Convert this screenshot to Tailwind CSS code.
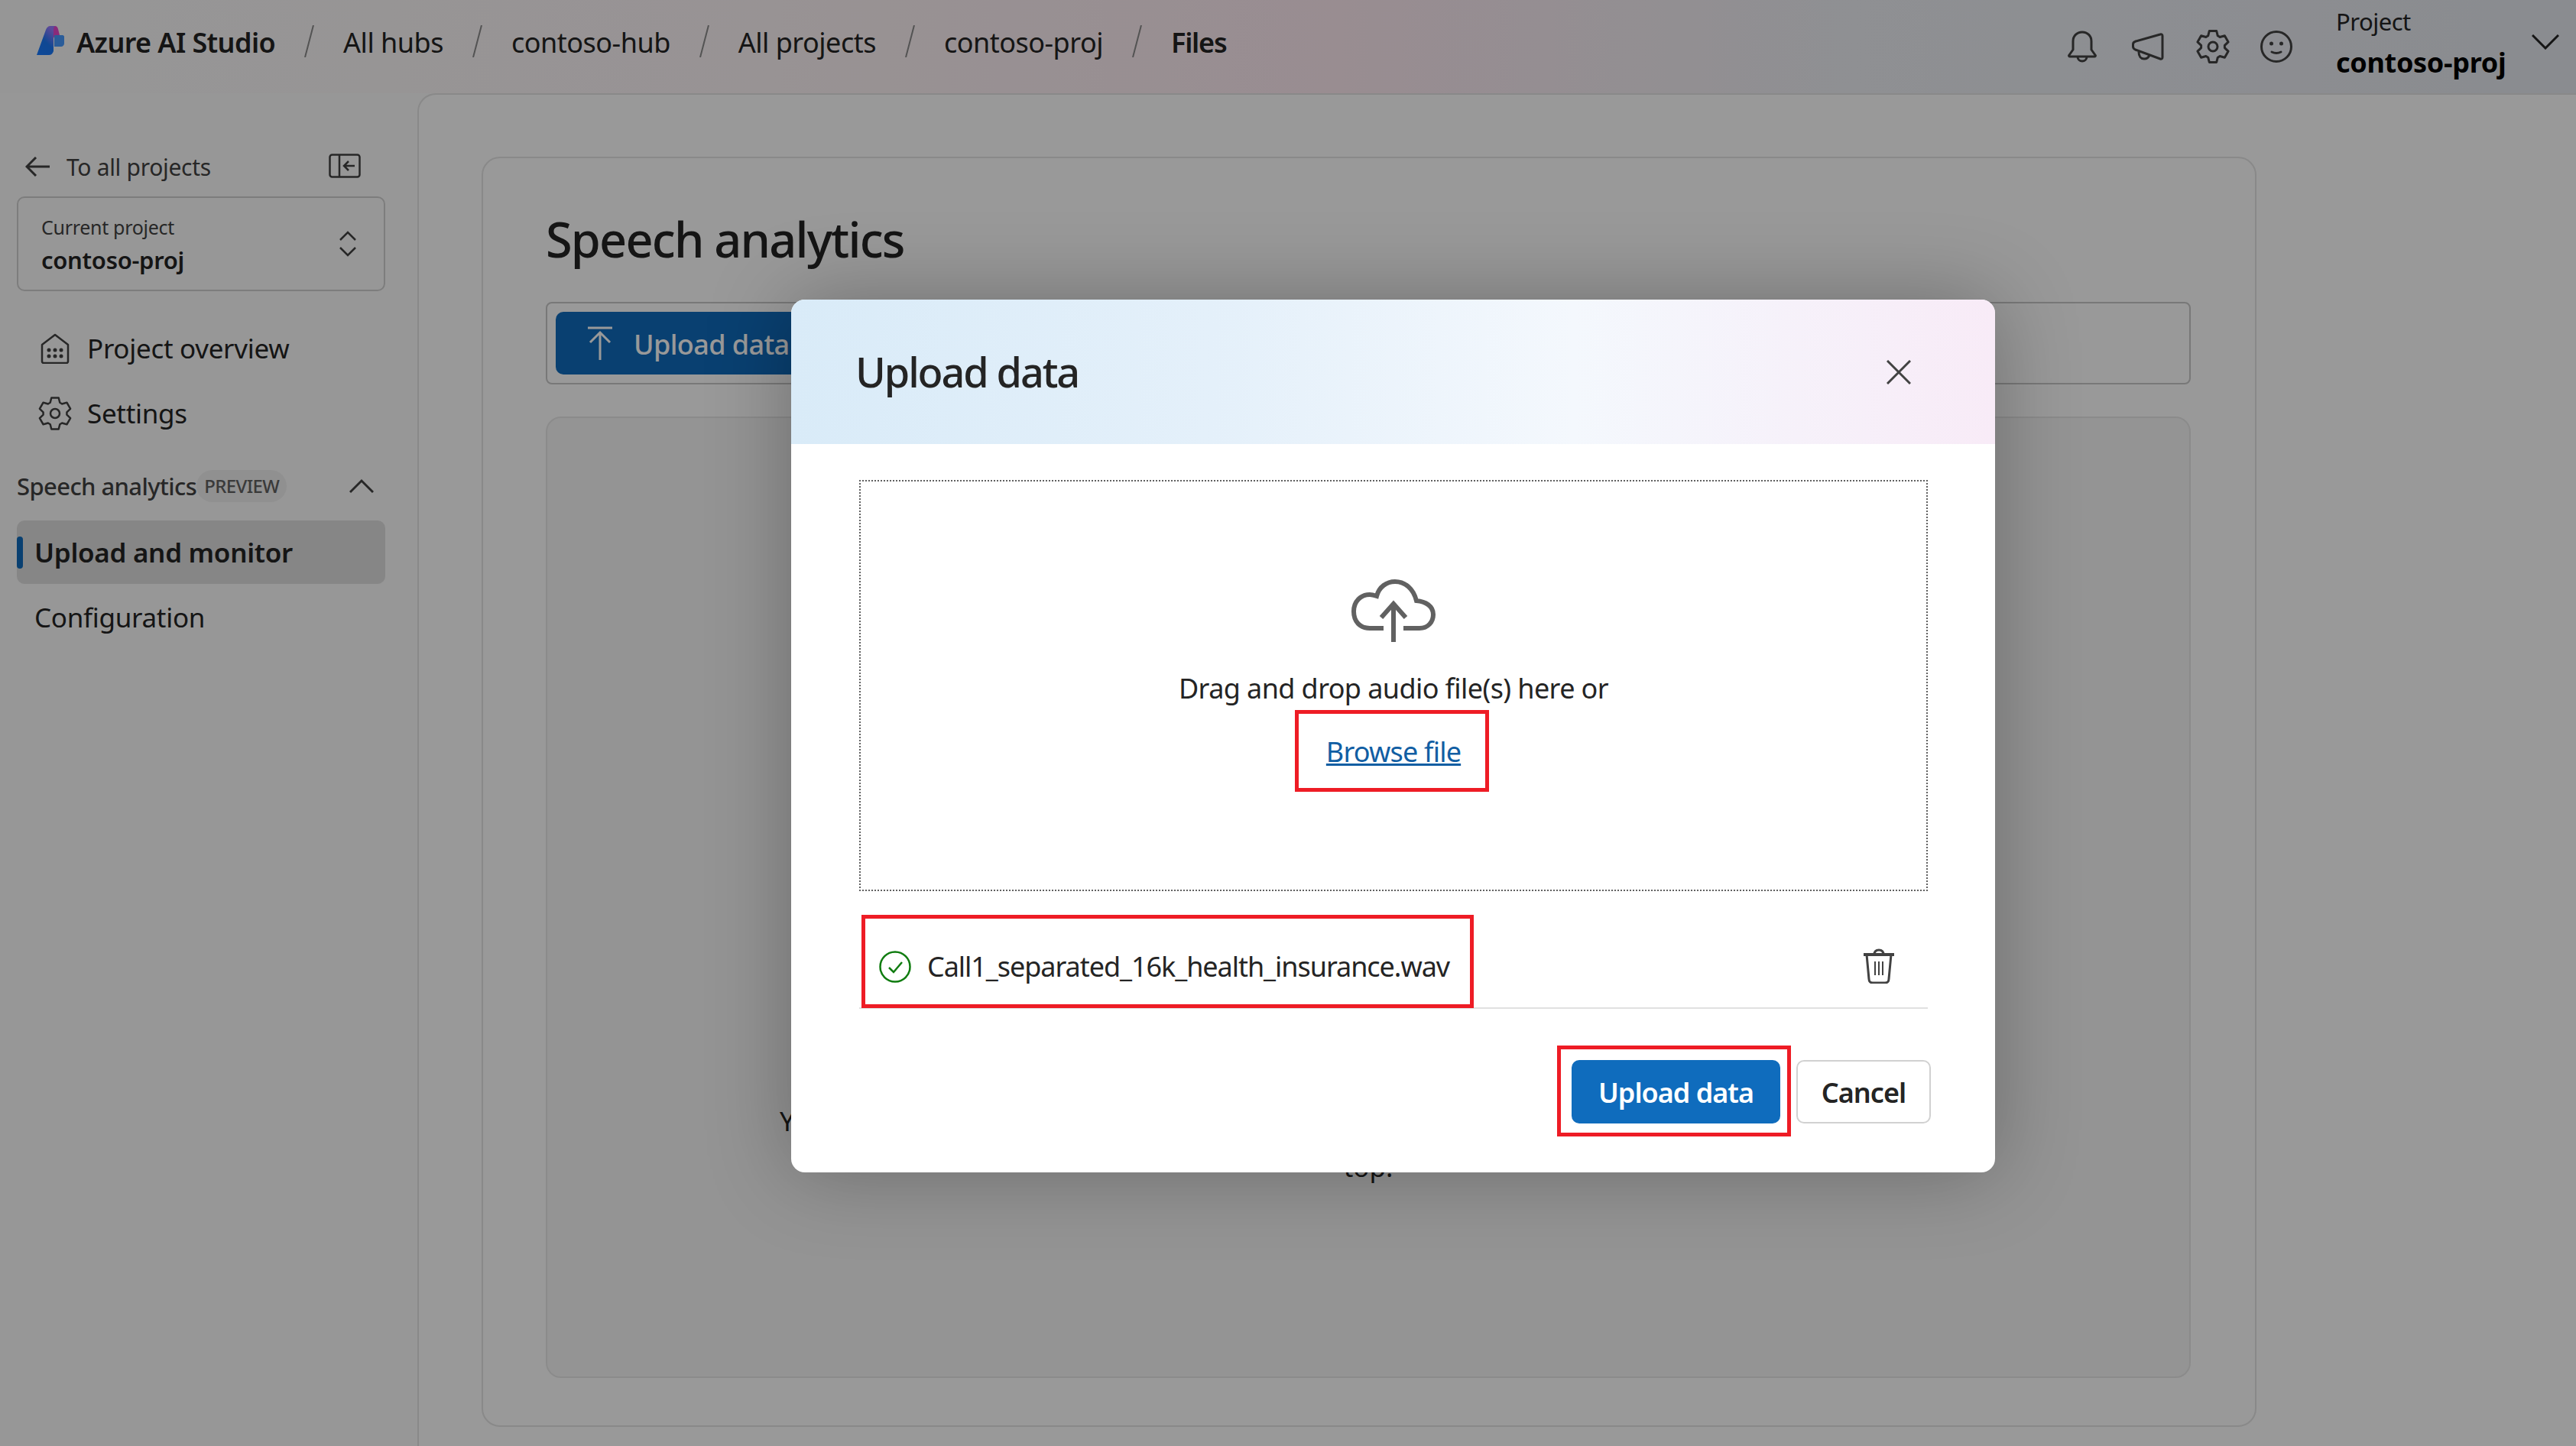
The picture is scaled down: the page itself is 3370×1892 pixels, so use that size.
<!DOCTYPE html>
<html lang="en">
<head>
    <meta charset="UTF-8">
    <meta name="viewport" content="width=device-width, initial-scale=1.0">
    <title>Speech analytics - Upload data</title>
    <script src="https://cdn.jsdelivr.net/npm/@tailwindcss/browser@4"></script>
</head>
<body class="font-['Noto_Sans',sans-serif] text-[#242424]">
<div class="relative w-[3370px] h-[1892px] overflow-hidden bg-[#fcfcfc] flex flex-col">

    <!-- top bar -->
    <header class="h-[122px] shrink-0 flex items-center pl-[48px] pr-[22px] text-[36px] tracking-[-0.5px] bg-[linear-gradient(90deg,#fbfbfb_0%,#fdf5f7_30%,#ffebf2_52%,#eef0f5_72%,#e6e9f0_100%)]">
        <nav class="flex items-center mb-[14px]">
            <svg class="w-[36px] h-[42px] mr-[16px]" viewBox="0 0 36 42">
                <defs>
                    <linearGradient id="logoBlue" x1="0" y1="1" x2="0.6" y2="0">
                        <stop offset="0" stop-color="#1a7bff"/>
                        <stop offset="0.55" stop-color="#1a78f5"/>
                        <stop offset="1" stop-color="#967bff"/>
                    </linearGradient>
                </defs>
                <path d="M24 1c2 0 3 1 4 4l2 8h-6l-3 6V1z" fill="#e646cc"/>
                <path d="M23 13h11c1 0 2 1 2 2v9c0 2-2 4-4 4h-9z" fill="#4699ff"/>
                <path d="M0 39L12 6c1-3 3-5 6-5h6c-1 1-2 2-2 5v28c-1 3-3 5-6 5z" fill="url(#logoBlue)"/>
            </svg>
            <span class="font-semibold pt-[4px] tracking-[-0.6px]">Azure AI Studio</span>
            <svg class="w-[13px] h-[42px] mx-[38px]" viewBox="0 0 13 42"><path d="M12 0L1 42" stroke="#8a8a8a" stroke-width="2"/></svg>
            <span class="pt-[4px]">All hubs</span>
            <svg class="w-[13px] h-[42px] mx-[38px]" viewBox="0 0 13 42"><path d="M12 0L1 42" stroke="#8a8a8a" stroke-width="2"/></svg>
            <span class="pt-[4px]">contoso-hub</span>
            <svg class="w-[13px] h-[42px] mx-[38px]" viewBox="0 0 13 42"><path d="M12 0L1 42" stroke="#8a8a8a" stroke-width="2"/></svg>
            <span class="pt-[4px]">All projects</span>
            <svg class="w-[13px] h-[42px] mx-[38px]" viewBox="0 0 13 42"><path d="M12 0L1 42" stroke="#8a8a8a" stroke-width="2"/></svg>
            <span class="pt-[4px]">contoso-proj</span>
            <svg class="w-[13px] h-[42px] mx-[38px]" viewBox="0 0 13 42"><path d="M12 0L1 42" stroke="#8a8a8a" stroke-width="2"/></svg>
            <span class="font-semibold pt-[4px] tracking-[-1.200px]">Files</span>
        </nav>

        <div class="ml-auto flex items-center">
            <svg class="w-[38px] h-[42px] mr-[46px]" viewBox="0 0 38 42" fill="none" stroke="#424242" stroke-width="3" stroke-linejoin="round">
                <path d="M19 2C12 2 7 7 7 14v11l-5 7c-1 1 0 2 1 2h32c1 0 2-1 1-2l-5-7V14C31 7 26 2 19 2z"/>
                <path d="M13 34c0 4 3 6 6 6s6-2 6-6"/>
            </svg>
            <svg class="w-[42px] h-[36px] mr-[42px]" viewBox="0 0 42 36" fill="none" stroke="#424242" stroke-width="3" stroke-linejoin="round">
                <path d="M37 2L5 11c-3 1-3.500 2-3.500 4v3c0 2 1 3 3 4L37 34c1.500.5 3 0 3-2V4c0-2-1.500-2.500-3-2z"/>
                <path d="M9 25c0 6 3 9 7 9s6-2 7-5"/>
            </svg>
            <svg class="w-[44px] h-[44px] mr-[40px]" viewBox="0 0 44 44" fill="none" stroke="#424242" stroke-width="3" stroke-linejoin="round">
                <path d="M17.300 1.500H26.700L28.300 7.800 31.100 9.500 37.400 7.700 42.100 15.900 37.400 20.400V23.600L42.100 28.100 37.400 36.300 31.100 34.500 28.300 36.200 26.700 42.500H17.300L15.700 36.200 12.900 34.500 6.600 36.300 1.900 28.100 6.600 23.600V20.400L1.900 15.900 6.600 7.700 12.900 9.500 15.700 7.800z"/>
                <circle cx="22" cy="22" r="6"/>
            </svg>
            <svg class="w-[42px] h-[42px] mr-[57px]" viewBox="0 0 42 42" fill="none" stroke="#424242" stroke-width="3">
                <circle cx="21" cy="21" r="19.500"/>
                <circle cx="14.500" cy="17" r="2.500" fill="#424242" stroke="none"/>
                <circle cx="27.500" cy="17" r="2.500" fill="#424242" stroke="none"/>
                <path d="M15 28c4 2 8 2 12 0" stroke-linecap="round"/>
            </svg>
            <div class="flex flex-col w-[256px] mb-[4px]">
                <span class="text-[31px] leading-[44px] text-[#242424] -mt-[6px]">Project</span>
                <span class="text-[36px] leading-[50px] mt-[7px] font-bold tracking-[-0.3px] text-black">contoso-proj</span>
            </div>
            <svg class="w-[36px] h-[20px] mb-[12px]" viewBox="0 0 36 20" fill="none" stroke="#242424" stroke-width="3"><path d="M1 1l17 17L35 1"/></svg>
        </div>
    </header>

    <div class="flex flex-1 min-h-0">
        <!-- sidebar -->
        <aside class="w-[546px] shrink-0 pl-[22px] pr-[42px] pt-[78px] tracking-[-0.3px]">
            <div class="flex items-center h-[36px] pl-[11px] pr-[32px] text-[#424242] text-[30px]">
                <svg class="w-[32px] h-[26px] mr-[22px]" viewBox="0 0 32 26" fill="none" stroke="#424242" stroke-width="3"><path d="M14 1L2 13l12 12M2 13h30"/></svg>
                <span>To all projects</span>
                <svg class="ml-auto mb-[2px] w-[42px] h-[32px]" viewBox="0 0 42 32" fill="none" stroke="#424242" stroke-width="2.500">
                    <rect x="1.500" y="1.500" width="39" height="29" rx="3"/>
                    <path d="M14 2v28M34 16H21M26 10l-6 6 6 6"/>
                </svg>
            </div>
            <div class="mt-[21px] h-[124px] border-[2px] border-[#d1d1d1] rounded-[10px] flex items-center pl-[30px] pr-[36px]">
                <div class="flex flex-col pt-[2px]">
                    <span class="text-[25px] leading-[36px] text-[#424242]">Current project</span>
                    <span class="text-[31px] leading-[42px] mt-[4px] font-semibold">contoso-proj</span>
                </div>
                <svg class="ml-auto w-[22px] h-[34px]" viewBox="0 0 22 34" fill="none" stroke="#424242" stroke-width="2.500"><path d="M1 12L11 2l10 10M1 22l10 10 10-10"/></svg>
            </div>
            <div class="mt-[53px] flex items-center h-[44px] pl-[31px] text-[35px]">
                <svg class="w-[38px] h-[40px] mr-[23px]" viewBox="0 0 38 40" fill="none" stroke="#424242" stroke-width="2.500" stroke-linejoin="round">
                    <path d="M19 2L2 15v22c0 1 1 2 2 2h30c1 0 2-1 2-2V15z"/>
                    <g fill="#424242" stroke="none"><circle cx="11" cy="22" r="2.500"/><circle cx="19" cy="22" r="2.500"/><circle cx="27" cy="22" r="2.500"/><circle cx="11" cy="30" r="2.500"/><circle cx="19" cy="30" r="2.500"/><circle cx="27" cy="30" r="2.500"/></g>
                </svg>
                <span>Project overview</span>
            </div>
            <div class="mt-[41px] flex items-center h-[44px] pl-[28px] text-[35px]">
                <svg class="w-[44px] h-[44px] mr-[20px]" viewBox="0 0 44 44" fill="none" stroke="#424242" stroke-width="2.500" stroke-linejoin="round">
                    <path d="M17.300 1.500H26.700L28.300 7.800 31.100 9.500 37.400 7.700 42.100 15.900 37.400 20.400V23.600L42.100 28.100 37.400 36.300 31.100 34.500 28.300 36.200 26.700 42.500H17.300L15.700 36.200 12.900 34.500 6.600 36.300 1.900 28.100 6.600 23.600V20.400L1.900 15.900 6.600 7.700 12.900 9.500 15.700 7.800z"/>
                    <circle cx="22" cy="22" r="6"/>
                </svg>
                <span>Settings</span>
            </div>
            <div class="mt-[52px] flex items-center h-[42px] pr-[15px]">
                <span class="text-[31px] font-medium tracking-[-0.6px] text-[#424242]">Speech analytics</span>
                <span class="h-[42px] px-[10px] rounded-full bg-[#f0f0f0] text-[24px] leading-[42px] font-medium tracking-[-0.6px] text-[#616161]">PREVIEW</span>
                <svg class="ml-auto w-[32px] h-[20px]" viewBox="0 0 32 20" fill="none" stroke="#424242" stroke-width="3"><path d="M1 18L16 3l15 15"/></svg>
            </div>
            <div class="relative mt-[24px] h-[83px] flex items-center pl-[23px] bg-[#e0e0e0] rounded-[10px] text-[35px] font-semibold">
                <span class="absolute left-[0] top-[21px] w-[8px] h-[42px] rounded-[4px] bg-[#0f6cbd]"></span>
                <span class="pt-[2px]">Upload and monitor</span>
            </div>
            <div class="mt-[22px] h-[44px] flex items-center pl-[23px] text-[35px]">Configuration</div>
        </aside>

        <!-- main panel -->
        <main class="flex-1 min-w-0 bg-white border-l-[2px] border-t-[2px] border-[#e4e4e4] rounded-tl-[24px] pl-[82px] pt-[81px] pr-[418px] pb-[25px]">
            <div class="h-full bg-white border-[2px] border-[#e4e4e4] rounded-[24px] pl-[82px] pr-[84px] pt-[66px] pb-[62px] flex flex-col">
                <h1 class="text-[63px] leading-[80px] font-medium tracking-[-1.800px]">Speech analytics</h1>
                <div class="mt-[42px] h-[108px] shrink-0 border-[2px] border-[#c8c8c8] rounded-[8px] flex items-center pl-[11px]">
                    <div class="h-[82px] w-[400px] rounded-[10px] bg-[#0f6cbd] text-white flex items-center pl-[42px] text-[36px] font-medium tracking-[-0.6px]">
                        <svg class="w-[32px] h-[44px] mr-[28px]" viewBox="0 0 32 44" fill="none" stroke="white" stroke-width="3"><path d="M0 2h32M16 44V8M3 21L16 8l13 13"/></svg>
                        <span class="pt-[3px]">Upload data</span>
                    </div>
                </div>
                <div class="mt-[42px] flex-1 bg-[#f7f7f7] border-[2px] border-[#e8e8e8] rounded-[20px] flex justify-center pt-[890px] text-[35px] leading-[60px] text-center">
                    <p class="w-[1540px] shrink-0 whitespace-nowrap">You have not uploaded any audio data as yet. To begin now, select the Upload data at the very<br>top.</p>
                </div>
            </div>
        </main>
    </div>

    <!-- dim layer -->
    <div class="absolute inset-0 bg-black/40"></div>

    <!-- dialog -->
    <div class="absolute left-[1035px] top-[392px] w-[1575px] h-[1142px] bg-white rounded-[18px] shadow-[0_0_110px_rgba(0,0,0,0.28)] overflow-hidden">
        <div class="h-[189px] flex items-center justify-between pl-[84px] pr-[110px] bg-[linear-gradient(90deg,#d9ebf8_0%,#e4f0fa_35%,#f4f8fd_65%,#f8ebf7_100%)]">
            <h2 class="text-[54px] font-medium tracking-[-2.100px]">Upload data</h2>
            <svg class="w-[32px] h-[32px]" viewBox="0 0 32 32" fill="none" stroke="#424242" stroke-width="3"><path d="M1 1l30 30M31 1L1 31"/></svg>
        </div>
        <div class="ml-[89px] mr-[88px] mt-[47px] h-[538px] border-[2px] border-dotted border-[#616161] flex flex-col items-center pt-[128px]">
            <svg class="w-[110px] h-[82px]" viewBox="0 0 110 82" fill="none" stroke="#616161" stroke-width="6">
                <path d="M42 64H24C11 64 3 55 3 42s9-22 21-22c3 0 6 1 9 2C36 10 46 3 57 3c13 0 24 9 28 25 12 1 22 7 22 18 0 10-7 18-18 18H68"/>
                <path d="M55 82V34M39 50l16-18 16 18"/>
            </svg>
            <p class="mt-[36px] text-[36px] leading-[50px] tracking-[-0.6px]">Drag and drop audio file(s) here or</p>
            <a class="mt-[33px] text-[36px] leading-[50px] tracking-[-0.8px] text-[#115ea3] underline">Browse file</a>
        </div>
        <div class="ml-[89px] mr-[88px] h-[154px] border-b-[2px] border-[#e0e0e0] flex items-center pt-[46px]">
            <svg class="ml-[26px] w-[42px] h-[42px] mr-[21px]" viewBox="0 0 42 42" fill="none" stroke="#107c10" stroke-width="2.500">
                <circle cx="21" cy="21" r="19.500"/>
                <path d="M13 22l6 6 11-13"/>
            </svg>
            <span class="text-[36px] tracking-[-1.050px]">Call1_separated_16k_health_insurance.wav</span>
            <svg class="ml-auto mr-[42px] mb-[2px] w-[44px] h-[46px]" viewBox="0 0 44 46" fill="none" stroke="#424242" stroke-width="3" stroke-linejoin="round">
                <path d="M2 8h40" stroke-width="4"/>
                <path d="M16 8c0-4 2-6 6-6s6 2 6 6"/>
                <path d="M6 8l3 32c0 3 2 5 5 5h16c3 0 5-2 5-5l3-32"/>
                <path d="M17 17v18M22 17v18M27 17v18" stroke-width="2"/>
            </svg>
        </div>
        <div class="mt-[67px] flex justify-end gap-[21px] pr-[84px]">
            <button class="w-[273px] h-[83px] rounded-[10px] bg-[#0f6cbd] text-white text-[36px] font-semibold tracking-[-1px] pt-[3px]">Upload data</button>
            <button class="w-[176px] h-[83px] rounded-[10px] bg-white border-[2px] border-[#d1d1d1] text-[36px] font-semibold tracking-[-1px] pt-[3px]">Cancel</button>
        </div>

        <!-- red callouts -->
        <div class="absolute left-[659px] top-[537px] w-[254px] h-[107px] border-[5px] border-[#ee1c25]"></div>
        <div class="absolute left-[92px] top-[805px] w-[801px] h-[122px] border-[5px] border-[#ee1c25]"></div>
        <div class="absolute left-[1002px] top-[976px] w-[306px] h-[119px] border-[5px] border-[#ee1c25]"></div>
    </div>
</div>
</body>
</html>
